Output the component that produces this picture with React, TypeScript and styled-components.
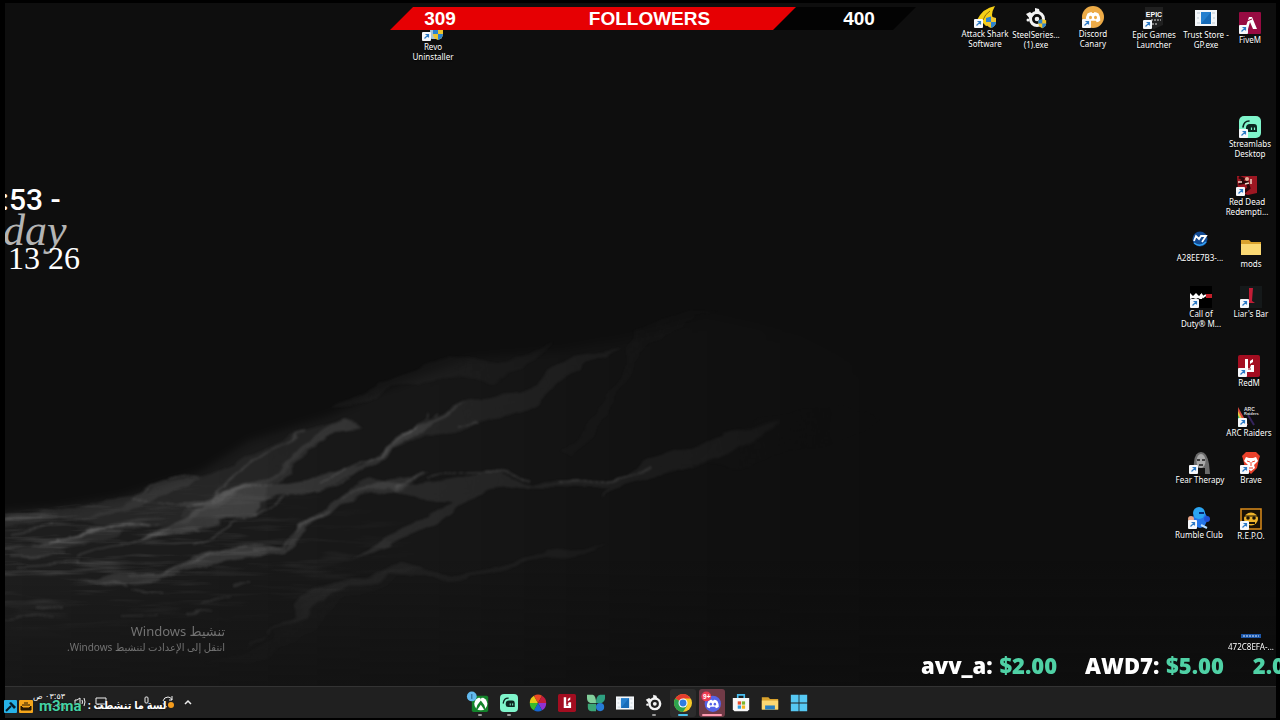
import React from "react";
import styled, { createGlobalStyle, css } from "styled-components";

const Global = createGlobalStyle`
  *, *::before, *::after { box-sizing: border-box; }
  html, body { margin: 0; background: #000; }
  button { font: inherit; color: inherit; border: 0; padding: 0; background: none; cursor: pointer; }
`;

const Screen = styled.div`
  position: relative;
  display: flex;
  flex-direction: column;
  min-height: 100vh;
  padding: 3px 4px 3px 5px;
  overflow: hidden;
  background: #000;
  color: #fff;
  font-family: "Open Sans", "Noto Sans", "DejaVu Sans", sans-serif;
`;

const Desktop = styled.main`
  flex: 1;
  display: flex;
  overflow: hidden;
  background: #0e0e0e;
`;

const Wallpaper = styled.svg`
  flex: 1;
  width: 100%;
  min-width: 0;
`;

/* ---------- desktop shortcuts ---------- */

const Shortcut = styled.button<{ $right: number; $top: number }>`
  position: absolute;
  right: ${(p) => p.$right}px;
  top: ${(p) => p.$top}px;
  width: 60px;
  display: flex;
  flex-direction: column;
  align-items: center;
  gap: 1px;
`;

const Tile = styled.span`
  position: relative;
  display: block;
  height: 22px;
  svg { display: block; }
`;

const Arrow = styled.span`
  position: absolute;
  left: 0;
  bottom: 0;
`;

const Label = styled.span`
  font-family: "Noto Sans", sans-serif;
  font-size: 8px;
  line-height: 10px;
  text-align: center;
  white-space: pre;
  color: #fff;
  text-shadow: 0 1px 1px #000;
`;

/* ---------- stream overlays ---------- */

const Goal = styled.section`
  position: absolute;
  top: 7px;
  left: calc(50% - 250px);
  width: 526px;
  height: 23px;
  display: grid;
  grid-template-columns: 100px 1fr 100px;
  padding-right: 7px;
  text-align: center;
  background: #030303;
  clip-path: polygon(23px 0, 100% 0, calc(100% - 23px) 100%, 0 100%);
  font-family: "Liberation Sans", Arial, sans-serif;
  font-size: 19px;
  line-height: 24px;
  font-weight: 700;
  isolation: isolate;
  &::before {
    content: "";
    position: absolute;
    z-index: -1;
    inset: 0 120px 0 0;
    background: #e60003;
    clip-path: polygon(0 0, 100% 0, calc(100% - 23px) 100%, 0 100%);
  }
`;

const Clock = styled.section`
  position: absolute;
  left: 5px;
  top: 183px;
  width: 90px;
  overflow: hidden;
  display: flex;
  flex-direction: column;
`;

const ClockTime = styled.span`
  font: 500 30px/34px Roboto, sans-serif;
  margin-left: -4px;
`;

const ClockDay = styled.span`
  margin: -8px 0 0 -2px;
  font: italic 44px/44px "Liberation Serif", serif;
  color: #b4b4b4;
`;

const ClockDate = styled.span`
  margin: -12px 0 0 3px;
  font: 32px/34px "Liberation Serif", serif;
`;

const Activation = styled.aside`
  position: absolute;
  left: 5px;
  bottom: 67px;
  width: 220px;
  direction: rtl;
  color: #727272;
  font-family: "Noto Sans", "DejaVu Sans", sans-serif;
`;

const ActivationTitle = styled.p`
  margin: 0;
  font-size: 13px;
  line-height: 17px;
`;

const ActivationText = styled.p`
  margin: 0;
  font-size: 10px;
  line-height: 14px;
`;

const Tips = styled.ul`
  position: absolute;
  right: 0;
  bottom: 41px;
  width: 359px;
  margin: 0;
  padding: 0;
  overflow: hidden;
  display: flex;
  gap: 28px;
  list-style: none;
  white-space: nowrap;
  font-family: "Open Sans", sans-serif;
  font-weight: 800;
  font-size: 22px;
  line-height: 30px;
`;

const Amount = styled.span`
  margin-left: 1px;
  color: #4fd1a5;
`;

const Chat = styled.div`
  position: absolute;
  left: 4px;
  bottom: 5px;
  height: 20px;
  display: flex;
  align-items: center;
  gap: 2px;
  font-family: Roboto, "DejaVu Sans Condensed", "DejaVu Sans", sans-serif;
  font-weight: 700;
  font-size: 15px;
  line-height: 20px;
  text-shadow: 0 0 2px #000;
  svg { display: block; }
`;

const ChatName = styled.span`
  margin-left: 4px;
  color: #45d3a4;
`;

const ChatText = styled.span`
  margin-left: 4px;
  font-size: 11px;
`;

/* ---------- taskbar ---------- */

const Taskbar = styled.nav`
  height: 32px;
  display: grid;
  grid-template-columns: 1fr auto 1fr;
  align-items: center;
  border-top: 1px solid #333;
  background: #202020;
`;

const Tray = styled.div`
  display: flex;
  align-items: center;
  gap: 7px;
  padding: 0 0 2px 22px;
`;

const TrayClock = styled.time`
  width: 38px;
  margin-right: 1px;
  direction: rtl;
  font: 8px/10px "DejaVu Sans", sans-serif;
`;

const TrayButton = styled.button<{ $apart?: boolean }>`
  width: 14px;
  height: 16px;
  display: grid;
  place-items: center;
  margin-left: ${(p) => (p.$apart ? 24 : 0)}px;
`;

const Apps = styled.div`
  display: flex;
  gap: 3px;
  padding-right: 2px;
`;

const AppButton = styled.button<{ $state?: "running" | "active" | "alert" }>`
  position: relative;
  width: 26px;
  height: 28px;
  display: grid;
  place-items: center;
  border-radius: 3px;
  ${(p) => p.$state === "active" && css`background: #2c2c2c;`}
  ${(p) => p.$state === "alert" && css`background: #713b47;`}
  &::after {
    content: "";
    position: absolute;
    bottom: 1px;
    left: 50%;
    height: 2px;
    border-radius: 1px;
    transform: translateX(-50%);
    width: ${(p) => (p.$state === "active" ? 10 : p.$state === "alert" ? 20 : p.$state ? 4 : 0)}px;
    background: ${(p) => (p.$state === "active" ? "#4cc2ee" : p.$state === "alert" ? "#ff9bb0" : "#9a9a9a")};
  }
`;

/* ---------- drawings ---------- */

const Svg = ({ size = 22, children }: { size?: number; children: React.ReactNode }) => (
  <svg width={size} height={size} viewBox="0 0 22 22" aria-hidden="true">{children}</svg>
);

const Shield = () => (
  <g>
    <path d="M12 12l5-1.500 5 1.500v4q0 4-5 6-5-2-5-6z" fill="#f0c52c" />
    <path d="M12 12l5-1.500v5.500h-5zM17 16h5q0 4-5 6z" fill="#2c83cf" />
  </g>
);

const SteelSeries = () => (
  <g>
    <circle cx="12" cy="12" r="6.500" fill="none" stroke="#f4f4f4" strokeWidth="3" />
    <circle cx="12" cy="12" r="2.300" fill="#f4f4f4" />
    <path d="M1 7l4-2 4 3-4 4zM10 1l4 1 1 4-5 0z" fill="#f4f4f4" />
    <circle cx="3" cy="13" r="1.500" fill="#f4f4f4" />
  </g>
);

const DiscordFace = ({ color = "#fff", hole = "#edab47" }) => (
  <g>
    <path d="M5.500 7.500Q8 6 9.500 6l.7 1h1.600l.7-1q2 0 4 1.500 2 3.500 1.800 7-1.800 1.500-3.500 1.800l-1-1.600H8.200l-1 1.600Q5 16 3.700 14.500q-.2-3.500 1.800-7z" fill={color} />
    <ellipse cx="8.500" cy="11.500" rx="1.500" ry="1.700" fill={hole} />
    <ellipse cx="13.500" cy="11.500" rx="1.500" ry="1.700" fill={hole} />
  </g>
);

const StreamlabsArt = () => (
  <g>
    <rect width="22" height="22" rx="5" fill="#7ff5cb" />
    <path d="M4 11Q5 5 10 5" fill="none" stroke="#0c2620" strokeWidth="1.600" strokeLinecap="round" />
    <path d="M7 12q0-4 4-4h4q3 0 3 3v5h-8q-3 0-3-3z" fill="#0c2620" />
    <path d="M12.500 11.500v2.500M15.500 11.500v2.500" stroke="#7ff5cb" strokeWidth="1.200" />
  </g>
);

const RedMArt = () => (
  <g>
    <rect width="22" height="22" rx="2" fill="#a30d20" />
    <path d="M7 4h3v9h2l1-3h3v7H7zM12 6l3-2v3l-3 2z" fill="#fff" />
    <path d="M10 14h3" stroke="#a30d20" strokeWidth="1" />
  </g>
);

const WindowArt = () => (
  <g>
    <rect x="0" y="3" width="22" height="16" fill="#f4f7fa" />
    <path d="M2 6h3M17 6h3M2 16h3M17 16h3M2 11h2M18 11h2" stroke="#bdc9d3" />
    <rect x="6" y="5" width="10" height="12" fill="#2580cf" />
    <path d="M6 17L16 5v12z" fill="#176bb8" />
  </g>
);

const FolderArt = () => (
  <g>
    <path d="M1 4h8l2 2h10v13H1z" fill="#d9a22d" />
    <path d="M1 8h20v11H1z" fill="#fad873" />
  </g>
);

type Item = { name: string; x: number; top: number; arrow?: boolean; art: React.ReactNode };

const shortcuts: Item[] = [
  { name: "Revo\nUninstaller", x: 433, top: 19, arrow: true, art: <><rect x="8" y="6" width="12" height="14" rx="2" fill="#a9c3d1" /><g transform="translate(-1 -1)"><Shield /></g></> },
  { name: "Attack Shark\nSoftware", x: 985, top: 6, arrow: true, art: <><path d="M3 14Q9 2 21 0q-3 5-3 9l2 9-8 2-4-4z" fill="#f5cf16" /><path d="M9 14Q11 8 16 5" fill="none" stroke="#8f6d08" /><Shield /></> },
  { name: "SteelSeries...\n(1).exe", x: 1036, top: 7, art: <><SteelSeries /><g transform="translate(4 4) scale(.78)"><Shield /></g></> },
  { name: "Discord\nCanary", x: 1093, top: 6, arrow: true, art: <><circle cx="11" cy="11" r="11" fill="#edab47" /><DiscordFace /></> },
  { name: "Epic Games\nLauncher", x: 1154, top: 7, arrow: true, art: <><path d="M2 0h18v18l-9 4-9-4z" fill="#202020" /><text x="11" y="10" textAnchor="middle" fontFamily="Liberation Sans Narrow, Liberation Sans" fontWeight="700" fontSize="7" fill="#fff">EPIC</text><path d="M8 13h10M9 17h6" stroke="#ddd" strokeDasharray="2 1" /></> },
  { name: "Trust Store -\nGP.exe", x: 1206, top: 7, art: <WindowArt /> },
  { name: "FiveM", x: 1250, top: 12, arrow: true, art: <><rect width="22" height="22" rx="1" fill="#970b42" /><path d="M10 5h3l5 12h-4l-3-7-2 7H6z" fill="#fff" /><path d="M8 9l5-2" stroke="#970b42" /></> },
  { name: "Streamlabs\nDesktop", x: 1250, top: 116, arrow: true, art: <StreamlabsArt /> },
  { name: "Red Dead\nRedempti...", x: 1247, top: 174, arrow: true, art: <><path d="M1 2h20v17l-9 2-10-3z" fill="#9d1722" /><path d="M3 3l4 2-2 4 6-1 2 6-5 4" fill="none" stroke="#2a0709" strokeWidth="3" /><circle cx="11" cy="5" r="2" fill="#e3b09a" /><path d="M2 8h4M9 10l4-1M15 5v5" stroke="#eed6c8" strokeWidth="1.500" /></> },
  { name: "A28EE7B3-...", x: 1200, top: 230, art: <><circle cx="11" cy="9" r="7.500" fill="#124a93" /><path d="M5 13q6 5 12-1" fill="none" stroke="#33a4f5" strokeWidth="1.500" /><path d="M5 11l2-5 3 3 2-3h5l-4 6" fill="none" stroke="#fff" strokeWidth="1.800" /></> },
  { name: "mods", x: 1251, top: 236, art: <FolderArt /> },
  { name: "Call of\nDuty® M...", x: 1201, top: 286, arrow: true, art: <><rect width="22" height="22" fill="#000" /><path d="M0 7l3 3 3-3 3 3 3-3v6h-2l-2-1-2 1-3-1-3 1z" fill="#fff" /><path d="M11 8l2 3 3-2" stroke="#fff" strokeWidth="2" fill="none" /><rect x="16" y="8" width="6" height="4" fill="#c5202a" /></> },
  { name: "Liar's Bar", x: 1251, top: 286, arrow: true, art: <><rect width="22" height="22" fill="#15191a" /><path d="M9 2h4l-1 13 3 2H9z" fill="#c31d36" /></> },
  { name: "RedM", x: 1249, top: 355, arrow: true, art: <RedMArt /> },
  { name: "ARC Raiders", x: 1249, top: 405, arrow: true, art: <><path d="M0 2l10 18H6L0 8z" fill="#d7483d" /><path d="M0 6l8 15H4L0 12z" fill="#e8c83e" /><path d="M0 10l6 12H0z" fill="#28b87d" /><path d="M10 10l6 10" stroke="#35245c" strokeWidth="2" /><text x="6" y="6" fontFamily="Liberation Sans" fontWeight="700" fontSize="5" fill="#ddd">ARC</text><text x="6" y="10" fontFamily="Liberation Sans" fontWeight="700" fontSize="4" fill="#ddd">Raiders</text></> },
  { name: "Fear Therapy", x: 1200, top: 452, arrow: true, art: <><path d="M5 10Q6 0 12 0t8 12l1 10H4z" fill="#6b6b6b" /><ellipse cx="12" cy="9" rx="4.500" ry="7" fill="#a9a9a9" /><path d="M8 8h3M13 8h3M10 13h4" stroke="#191919" strokeWidth="1.500" /><path d="M7 16h9v6H7z" fill="#111" /></> },
  { name: "Brave", x: 1251, top: 452, arrow: true, art: <><path d="M6 0h10l4 4-1 3-2 9-6 6-6-6L3 7 2 4z" fill="#e9412b" /><path d="M6 5l3 1h4l3-1 2 4-4 4 1 3-4 3-4-3 1-3-4-4z" fill="#fff" /><path d="M7 9l3 1M15 9l-3 1M11 10v4M9 16h4" stroke="#e9412b" /></> },
  { name: "Rumble Club", x: 1199, top: 507, arrow: true, art: <><ellipse cx="12" cy="12" rx="7" ry="9" fill="#2475e8" /><circle cx="11" cy="6" r="6" fill="#2ba5f2" /><circle cx="3" cy="12" r="3" fill="#e8a588" /><circle cx="19" cy="12" r="3" fill="#2053d8" /><path d="M11 6h5" stroke="#052a78" strokeWidth="2" /><path d="M13 18l6 3" stroke="#b4dcff" strokeWidth="2" /></> },
  { name: "R.E.P.O.", x: 1251, top: 508, arrow: true, art: <><rect x="1" y="1" width="20" height="20" fill="#171006" stroke="#dc8c1b" strokeWidth="1.500" /><ellipse cx="11" cy="11" rx="7" ry="6.500" fill="#eeb32a" /><path d="M4 8h14" stroke="#171006" /><circle cx="8" cy="10" r="1.800" fill="#171006" /><circle cx="14" cy="10" r="1.800" fill="#171006" /><path d="M7 14h8v2H7z" fill="#171006" /></> },
  { name: "472C8EFA-...", x: 1251, top: 619, art: <><rect x="1" y="15" width="20" height="4" fill="#1d57a8" /><path d="M3 17h16" stroke="#dce9ff" strokeDasharray="2 1" /></> },
];

type TaskApp = { name: string; state?: "running" | "active" | "alert"; art: React.ReactNode };

const apps: TaskApp[] = [
  { name: "Xbox", state: "running", art: <><rect x="1" y="2" width="20" height="20" rx="2" fill="#13832a" /><circle cx="12" cy="12" r="8" fill="#fff" /><path d="M6 19q1-6 6-11 5 5 6 11h-2l-4-6-4 6zM8 4q4 0 4 3 0-3 4-3-4-2-8 0z" fill="#13832a" /><circle cx="1" cy="3" r="6" fill="#62b9ee" /><path d="M1 0v6" stroke="#174b70" /></> },
  { name: "Streamlabs", state: "running", art: <StreamlabsArt /> },
  { name: "Lighting", art: <><path d="M11 11L1 11A10 10 0 0 1 6 2z" fill="#e6ca16" /><path d="M11 11L6 2A10 10 0 0 1 16 2z" fill="#ec4924" /><path d="M11 11L16 2A10 10 0 0 1 21 11z" fill="#c41d3d" /><path d="M11 11H21A10 10 0 0 1 16 20z" fill="#8f32d2" /><path d="M11 11L16 20A10 10 0 0 1 6 20z" fill="#1667d0" /><path d="M11 11L6 20A10 10 0 0 1 1 11z" fill="#38ba2b" /></> },
  { name: "RedM", art: <RedMArt /> },
  { name: "Butterfly", art: <><path d="M0 1h7q4 1 4 10H4Q0 10 0 5z" fill="#82cf9b" /><path d="M22 1h-6q-5 1-5 10h7q4-2 4-6z" fill="#2ea080" /><path d="M1 12h10v9H5q-4 0-4-5z" fill="#3ba676" /><circle cx="16" cy="16" r="5" fill="#277cd5" /></> },
  { name: "Trust Store", art: <WindowArt /> },
  { name: "SteelSeries", state: "running", art: <SteelSeries /> },
  { name: "Chrome", state: "active", art: <><circle cx="11" cy="11" r="11" fill="#f7c928" /><path d="M11 11L1.500 5.500A11 11 0 0 1 20.500 5.500H11z" fill="#e33b2e" /><path d="M1.500 5.500A11 11 0 0 0 11 22l5-8-5-3z" fill="#2da44e" /><circle cx="11" cy="11" r="5.500" fill="#fff" /><circle cx="11" cy="11" r="4.200" fill="#2f7de1" /></> },
  { name: "Discord", state: "alert", art: <><circle cx="12" cy="12" r="10" fill="#5563e8" /><g transform="translate(1 1)"><DiscordFace hole="#5563e8" /></g><circle cx="4" cy="3" r="6" fill="#ed3d53" /><text x="0" y="6" fontFamily="Liberation Sans" fontWeight="700" fontSize="8" fill="#fff">9+</text></> },
  { name: "Microsoft Store", art: <><path d="M7 6V1h8v5" fill="none" stroke="#49bff0" strokeWidth="2" /><path d="M1 5h20v14l-2 2H3l-2-2z" fill="#f7f7f7" /><path d="M7 9h4v4H7z" fill="#ea4d2c" /><path d="M12 9h4v4h-4z" fill="#7ab52a" /><path d="M7 14h4v4H7z" fill="#2f9de0" /><path d="M12 14h4v4h-4z" fill="#f3b51b" /></> },
  { name: "File Explorer", art: <><FolderArt /><path d="M5 14h12v5H5z" fill="#277fc1" /></> },
  { name: "Start", art: <><path d="M1 1h9.500v9.500H1zM11.500 1H21v9.500h-9.500zM1 11.500h9.500V21H1zM11.500 11.500H21V21h-9.500z" fill="#56c8f3" /></> },
];

const ridges: [string, number][] = [
  ["M5 516L70 507 130 500 160 484 205 475 170 490 140 507 90 520 5 526z", 0.1],
  ["M85 520L130 503 145 487 190 474 235 467 250 455 290 438 320 427 345 419 362 428 340 430 318 442 290 465 265 480 225 500 190 520 160 525 120 530z", 0.07],
  ["M205 500L250 482 278 470 302 449 325 429 343 419 360 427 337 432 322 441 300 460 277 479 240 490z", 0.13],
  ["M130 502L180 506 235 488 260 483 330 472 357 470 380 455 400 434 440 413 470 400 430 426 405 442 378 463 350 480 305 492 260 500 255 515 220 523 175 532 128 548 160 528 205 508z", 0.18],
  ["M180 515L215 492 265 484 268 495 262 513 220 522z", 0.06],
  ["M380 458L400 434 440 415 470 397 520 393 550 371 575 356 630 348 590 361 556 383 530 407 490 421 450 438 425 435z", 0.11],
  ["M5 548L45 540 100 528 150 523 175 515 130 532 85 545 30 556z", 0.1],
  ["M45 540L110 526 160 522 100 531 50 541z", 0.22],
  ["M77 577L120 573 160 575 190 558 245 545 284 547 300 527 335 500 390 480 430 475 400 490 350 501 315 522 283 553 230 560 190 570 155 580 110 586z", 0.17],
  ["M335 500L370 480 420 485 465 478 485 468 530 481 590 480 625 475 650 460 700 445 740 430 780 420 750 445 710 460 670 471 625 482 600 502 610 488 560 486 520 485 490 488 470 500 455 508 432 526 400 542 355 557 385 538 430 514 455 503 425 500 390 488z", 0.14],
  ["M300 598L350 578 400 565 450 576 500 568 560 550 610 548 540 560 490 574 440 580 390 575 340 590 300 614 280 628 245 645 200 662 260 640 290 617z", 0.08],
  ["M560 450L585 430 600 405 624 375 635 330 690 313 720 310 650 342 627 382 600 424 570 456z", 0.04],
  ["M330 410L390 380 450 356 500 363 555 343 520 370 490 382 440 378 400 385 350 408z", 0.05],
  ["M700 460L720 437 760 418 840 405 880 420 830 445 770 460 740 470z", 0.03],
  ["M200 662Q260 655 290 620T380 572L420 570 340 600 300 640 250 665z", 0.02],
];

const glints = [
  "M45 541Q90 529 145 525", "M77 557Q110 545 128 546 145 542 170 527", "M130 502Q155 502 190 509",
  "M190 509Q220 495 270 483", "M257 550Q280 552 287 541 295 529 320 516", "M130 577Q165 577 180 567 205 553 250 547",
  "M140 494Q155 480 200 474M210 498Q240 470 270 452L310 432M320 480Q350 470 380 458L400 438 440 410M190 545Q230 530 290 495",
  "M5 520L60 518M8 532L55 526M5 544L60 538M10 554L65 553M18 566L80 562",
  "M398 487L425 475M300 530L330 510M315 490L350 482M5 618L55 613M35 607L65 605M135 587L165 592M120 618L160 617M100 580L130 585M200 605L230 595M185 616L215 612M235 586L250 586",
  "M400 436Q415 430 430 410M455 430L480 425M430 480Q480 462 530 478M560 482Q620 480 650 468",
];

const DesktopWallpaper = () => (
  <Wallpaper viewBox="5 3 1271 683" preserveAspectRatio="xMidYMid slice" aria-hidden="true">
    <defs>
      <linearGradient id="slope" gradientUnits="userSpaceOnUse" x1="5" y1="0" x2="900" y2="0">
        <stop offset="0" stopColor="#fff" stopOpacity=".07" />
        <stop offset=".35" stopColor="#fff" stopOpacity=".045" />
        <stop offset=".75" stopColor="#fff" stopOpacity=".012" />
        <stop offset="1" stopColor="#fff" stopOpacity="0" />
      </linearGradient>
      <linearGradient id="ground" gradientUnits="userSpaceOnUse" x1="0" y1="560" x2="0" y2="690">
        <stop offset="0" stopColor="#0e0e0e" stopOpacity="0" />
        <stop offset="1" stopColor="#0e0e0e" stopOpacity=".5" />
      </linearGradient>
      <linearGradient id="ridge" gradientUnits="userSpaceOnUse" x1="5" y1="0" x2="900" y2="0">
        <stop offset="0" stopColor="#c0c0c0" stopOpacity=".8" />
        <stop offset=".25" stopColor="#c0c0c0" />
        <stop offset=".6" stopColor="#c0c0c0" stopOpacity=".6" />
        <stop offset="1" stopColor="#c0c0c0" stopOpacity=".1" />
      </linearGradient>
      <filter id="soft" x="-5%" y="-5%" width="110%" height="110%">
        <feTurbulence type="fractalNoise" baseFrequency=".018 .045" numOctaves="3" seed="4" result="n" />
        <feDisplacementMap in="SourceGraphic" in2="n" scale="16" xChannelSelector="R" yChannelSelector="G" />
        <feGaussianBlur stdDeviation="1.300" />
      </filter>
      <filter id="haze"><feGaussianBlur stdDeviation="5" /></filter>
      <filter id="ripple" x="0" y="0" width="100%" height="100%">
        <feTurbulence type="fractalNoise" baseFrequency=".014 .13" numOctaves="3" seed="9" />
        <feColorMatrix values="0 0 0 0 1  0 0 0 0 1  0 0 0 0 1  1.600 0 0 0 -.78" />
      </filter>
      <radialGradient id="rippleFade" gradientUnits="userSpaceOnUse" cx="0" cy="0" r="1" gradientTransform="translate(20 550) scale(420 90)">
        <stop offset="0" stopColor="#fff" />
        <stop offset="1" stopColor="#fff" stopOpacity="0" />
      </radialGradient>
      <mask id="rippleMask">
        <path d="M0 512L60 506 130 498 220 480 450 480V660H0z" fill="url(#rippleFade)" />
      </mask>
    </defs>
    <path d="M-10 514L60 508 120 498 200 473 250 441 330 416 400 384 470 359 560 351 640 336 710 316 800 336 900 386V700H-10z" fill="url(#slope)" filter="url(#haze)" />
    <g mask="url(#rippleMask)" opacity=".35">
      <rect x="0" y="480" width="450" height="180" filter="url(#ripple)" />
    </g>
    <g filter="url(#soft)">
      {ridges.map(([d, o]) => <path key={d} d={d} fill="url(#ridge)" opacity={o} />)}
      {glints.map((d) => <path key={d} d={d} fill="none" stroke="#aaa" strokeWidth="1.500" opacity=".2" />)}
    </g>
    <path d="M-10 560H1290V700H-10z" fill="url(#ground)" />
  </Wallpaper>
);

export default function App() {
  return (
    <Screen>
      <Global />
      <Desktop><DesktopWallpaper /></Desktop>

      {shortcuts.map((s) => (
        <Shortcut key={s.name} $right={1250 - s.x} $top={s.top}>
          <Tile>
            <Svg>{s.art}</Svg>
            {s.arrow && (
              <Arrow>
                <svg width="9" height="9" viewBox="0 0 9 9" aria-hidden="true">
                  <rect width="9" height="9" rx="1" fill="#f6f8fb" />
                  <path d="M2.500 6.500L6 3M3.500 2.500h3v3" fill="none" stroke="#2c7ac6" strokeWidth="1.200" />
                </svg>
              </Arrow>
            )}
          </Tile>
          <Label>{s.name}</Label>
        </Shortcut>
      ))}

      <Goal>
        <span>309</span>
        <span>FOLLOWERS</span>
        <span>400</span>
      </Goal>

      <Clock>
        <ClockTime>:53 -</ClockTime>
        <ClockDay>day</ClockDay>
        <ClockDate>13 26</ClockDate>
      </Clock>

      <Activation lang="ar">
        <ActivationTitle>تنشيط Windows</ActivationTitle>
        <ActivationText>انتقل إلى الإعدادت لتنشيط Windows.</ActivationText>
      </Activation>

      <Tips>
        <li>avv_a: <Amount>$2.00</Amount></li>
        <li>AWD7: <Amount>$5.00</Amount></li>
        <li><Amount>2.0</Amount></li>
      </Tips>

      <Taskbar>
        <Tray>
          <TrayClock>٠٣:٥٣ ص<br />٢٠٢٦</TrayClock>
          <TrayButton aria-label="Volume">
            <svg width="12" height="12" viewBox="0 0 12 12" fill="none" stroke="#eee"><path d="M1 4h2l3-2v8L3 8H1zM8 4q1 2 0 4M10 2q2 4 0 8" /></svg>
          </TrayButton>
          <TrayButton aria-label="Network">
            <svg width="12" height="12" viewBox="0 0 12 12" fill="none" stroke="#eee"><path d="M1 2h10v6H1zM3 11h6M6 8v3" /></svg>
          </TrayButton>
          <TrayButton aria-label="Microphone" $apart>
            <svg width="12" height="12" viewBox="0 0 12 12" fill="none" stroke="#eee"><rect x="5" y="1" width="3" height="6" rx="1" /></svg>
          </TrayButton>
          <TrayButton aria-label="Updates">
            <svg width="14" height="14" viewBox="0 0 14 14" fill="none" stroke="#eee"><path d="M3 6q1-4 5-4 3 0 4 3V1M12 5H9M3 8q1 3 4 4" /><circle cx="11" cy="10" r="3" fill="#f59c1c" stroke="none" /></svg>
          </TrayButton>
          <TrayButton aria-label="Show hidden icons">
            <svg width="12" height="12" viewBox="0 0 12 12" fill="none" stroke="#eee" strokeWidth="1.500"><path d="M3 8l3-3 3 3" /></svg>
          </TrayButton>
        </Tray>
        <Apps>
          {apps.map((a) => (
            <AppButton key={a.name} $state={a.state} aria-label={a.name}>
              <svg width="18" height="18" viewBox="0 0 22 22" overflow="visible" aria-hidden="true">{a.art}</svg>
            </AppButton>
          ))}
        </Apps>
      </Taskbar>

      <Chat>
        <svg width="13" height="13" viewBox="0 0 13 13" aria-hidden="true"><rect width="13" height="13" rx="1" fill="#27b2e8" /><path d="M2 11l5-5" stroke="#071c28" strokeWidth="2" /><path d="M5 3l2-1 5 5-2 2z" fill="#071c28" /></svg>
        <svg width="14" height="13" viewBox="0 0 14 13" aria-hidden="true"><rect width="14" height="13" rx="1" fill="#f5a61b" /><path d="M3 5h8M2 6l2 2h6l2-2v4H2zM5 3h4" stroke="#241603" fill="#241603" /></svg>
        <ChatName>m3ma</ChatName>
        <ChatText>: لسة ما تنشطت</ChatText>
      </Chat>
    </Screen>
  );
}
